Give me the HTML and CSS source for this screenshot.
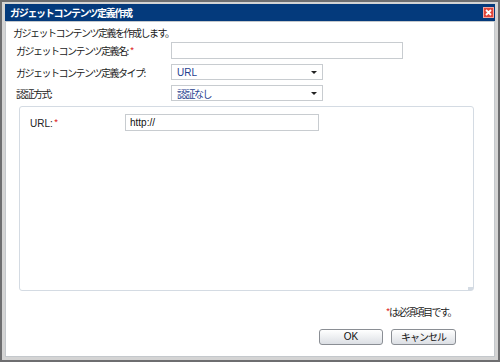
FILE: index.html
```html
<!DOCTYPE html>
<html lang="ja">
<head>
  <meta charset="UTF-8">
  <title>ガジェットコンテンツ定義作成</title>
  <link rel="stylesheet" href="styles.css">
</head>
<body>
  <div class="window">
    <div class="titlebar">
      <span class="title">ガジェットコンテンツ定義作成</span>
      <span class="close">
        <svg width="11" height="11" viewBox="0 0 11 11">
          <rect x="0.5" y="0.5" width="10" height="10" fill="#e0453a" stroke="#f6a49c"/>
          <path d="M3 3 L8 8 M8 3 L3 8" stroke="#fff" stroke-width="1.8"/>
        </svg>
      </span>
    </div>
    <div class="content">
      <p class="intro">ガジェットコンテンツ定義を作成します。</p>

      <div class="row">
        <label class="label">ガジェットコンテンツ定義名:<span class="req">*</span></label>
        <input type="text" class="field name-field">
      </div>
      <div class="row">
        <label class="label">ガジェットコンテンツ定義タイプ:</label>
        <div class="select"><span class="latin">URL</span><span class="arrow"></span></div>
      </div>
      <div class="row">
        <label class="label">認証方式:</label>
        <div class="select"><span>認証なし</span><span class="arrow"></span></div>
      </div>

      <div class="panel">
        <div class="row">
          <label class="label url-label"><span class="latin">URL:</span><span class="req">*</span></label>
          <input type="text" class="field url-field" value="http://">
        </div>
        <span class="grip"></span>
      </div>

      <p class="note"><span class="req">*</span>は必須項目です。</p>

      <div class="buttons">
        <button class="btn ok">OK</button>
        <button class="btn">キャンセル</button>
      </div>
    </div>
  </div>
</body>
</html>
```

FILE: styles.css
```css
body {
  margin: 0;
  font-family: "Noto Sans CJK JP", "Liberation Sans", sans-serif;
  font-size: 10px;
  color: #222;
}

.window {
  width: 500px;
  height: 362px;
  box-sizing: border-box;
  border: 2px solid #6e6e70;
  background-color: #d4d4d4;
  padding: 2px 3px 3px 3px;
  display: flex;
  flex-direction: column;
}

.titlebar {
  height: 17px;
  background-color: #043a7c;
  display: flex;
  align-items: center;
  justify-content: space-between;
  padding: 0 1px 0 5px;
  flex-shrink: 0;
}

.title {
  color: #fff;
  font-weight: bold;
  font-size: 10px;
  letter-spacing: -1.3px;
}

.close {
  display: flex;
}

.content {
  flex: 1;
  background-color: #fff;
  border: 1px solid #c4c8cc;
  padding: 3px 38px 0 7px;
  display: flex;
  flex-direction: column;
}

.intro {
  margin: 0;
  height: 16px;
  line-height: 16px;
  letter-spacing: -1.5px;
}

.row {
  display: flex;
  align-items: center;
  padding-left: 3px;
  margin-top: 5px;
}

.row:first-of-type {
  margin-top: 1px;
}

.label {
  width: 155px;
  letter-spacing: -1.5px;
}

.req {
  color: #e03030;
  margin-left: 2px;
}

.latin {
  font-family: "Liberation Sans", sans-serif;
  letter-spacing: 0;
}

.field {
  box-sizing: border-box;
  height: 17px;
  border: 1px solid #c8ccd0;
  padding: 0 4px;
  font-family: "Liberation Sans", sans-serif;
  font-size: 10px;
  color: #111;
}

.name-field {
  width: 232px;
}

.select {
  box-sizing: border-box;
  width: 152px;
  height: 16px;
  border: 1px solid #c8ccd0;
  display: flex;
  align-items: center;
  justify-content: space-between;
  padding: 0 5px;
  color: #1f3f8f;
  letter-spacing: -1.5px;
}

.arrow {
  width: 0;
  height: 0;
  border-left: 3px solid transparent;
  border-right: 3px solid transparent;
  border-top: 3px solid #222;
}

.panel {
  position: relative;
  box-sizing: border-box;
  width: 455px;
  height: 185px;
  margin: 5px 0 0 6px;
  border: 1px solid #d4dbe3;
  border-radius: 3px;
  padding: 7px 0 0 7px;
}

.panel .row {
  margin-top: 0;
}

.url-label {
  width: 95px;
}

.url-label .req {
  margin-left: 1px;
}

.url-field {
  width: 194px;
  height: 17px;
}

.grip {
  position: absolute;
  right: 0;
  bottom: 0;
  width: 5px;
  height: 3px;
  background-color: #d4dbe3;
}

.note {
  margin: 13px 0 0 0;
  text-align: right;
  letter-spacing: -1.5px;
}

.note .req {
  margin: 0;
}

.buttons {
  display: flex;
  justify-content: flex-end;
  gap: 8px;
  margin-top: 10px;
}

.btn {
  height: 16px;
  width: 65px;
  padding: 0;
  border: 1px solid #8a8e94;
  border-radius: 3px;
  background: linear-gradient(#ffffff, #dcdfe4);
  font-family: "Noto Sans CJK JP", "Liberation Sans", sans-serif;
  font-size: 10px;
  line-height: 14px;
  color: #111;
  letter-spacing: -1px;
}

.btn.ok {
  width: 64px;
  font-family: "Liberation Sans", sans-serif;
  letter-spacing: 0;
}
```
